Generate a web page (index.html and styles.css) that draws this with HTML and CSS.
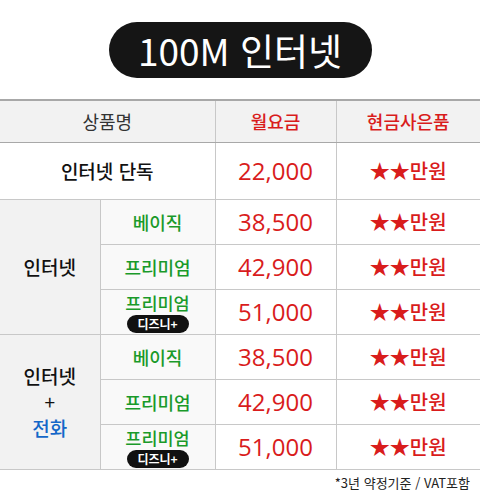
FILE: index.html
```html
<!DOCTYPE html>
<html lang="ko">
<head>
<meta charset="utf-8">
<link rel="stylesheet" href="styles.css">
</head>
<body>
<div class="page">
  <div class="title-wrap"><h1 class="title">100M 인터넷</h1></div>
  <table class="price">
    <colgroup><col class="c1"><col class="c2"><col class="c3"><col class="c4"></colgroup>
    <thead>
      <tr class="head">
        <th colspan="2" class="h-name">상품명</th>
        <th class="h-red">월요금</th>
        <th class="h-red">현금사은품</th>
      </tr>
    </thead>
    <tbody>
      <tr class="solo">
        <td colspan="2" class="solo-name">인터넷 단독</td>
        <td class="fee">22,000</td>
        <td class="gift">★★만원</td>
      </tr>
      <tr class="sub">
        <td rowspan="3" class="group">인터넷</td>
        <td class="plan">베이직</td>
        <td class="fee">38,500</td>
        <td class="gift">★★만원</td>
      </tr>
      <tr class="sub">
        <td class="plan">프리미엄</td>
        <td class="fee">42,900</td>
        <td class="gift">★★만원</td>
      </tr>
      <tr class="sub">
        <td class="plan"><div class="plan-stack"><span class="plan-name">프리미엄</span><span class="badge">디즈니+</span></div></td>
        <td class="fee">51,000</td>
        <td class="gift">★★만원</td>
      </tr>
      <tr class="sub">
        <td rowspan="3" class="group">인터넷<br><span class="plus">+</span><br><span class="blue">전화</span></td>
        <td class="plan">베이직</td>
        <td class="fee">38,500</td>
        <td class="gift">★★만원</td>
      </tr>
      <tr class="sub">
        <td class="plan">프리미엄</td>
        <td class="fee">42,900</td>
        <td class="gift">★★만원</td>
      </tr>
      <tr class="sub last">
        <td class="plan"><div class="plan-stack"><span class="plan-name">프리미엄</span><span class="badge">디즈니+</span></div></td>
        <td class="fee">51,000</td>
        <td class="gift">★★만원</td>
      </tr>
    </tbody>
  </table>
  <p class="note">*3년 약정기준 / VAT포함</p>
</div>
</body>
</html>
```

FILE: styles.css
```css
* { box-sizing: border-box; }
html, body { margin: 0; padding: 0; background: #fff; }
body {
  width: 480px;
  font-family: "Noto Sans CJK KR", "Noto Sans", sans-serif;
  color: #111;
}
.page { width: 480px; }
.title-wrap {
  display: flex;
  justify-content: center;
  padding-top: 22px;
  height: 99px;
}
.title {
  margin: 0;
  width: 263px;
  height: 56px;
  border-radius: 28px;
  background: #151515;
  color: #fff;
  font-size: 37px;
  font-weight: 400;
  line-height: 56px;
  text-align: center;
  letter-spacing: 0;
}
.price {
  width: 480px;
  border-collapse: collapse;
  table-layout: fixed;
}
.c1 { width: 100px; }
.c2 { width: 115px; }
.c3 { width: 121px; }
.c4 { width: 144px; }
.price th, .price td {
  border: 1px solid #c8c8c8;
  padding: 0;
  text-align: center;
  vertical-align: middle;
}
.price tr > :first-child { border-left: none; }
.price tr > :last-child { border-right: none; }
.head th {
  height: 42px;
  background: #f2f2f2;
  border-top: 2px solid #a8a8a8;
  border-bottom: 1px solid #a8a8a8;
  font-size: 18px;
  font-weight: 400;
  color: #333;
}
.head th.h-red { color: #d91c1c; font-weight: 500; }
.solo td { height: 57px; }
.solo-name { font-size: 19px; font-weight: 500; color: #111; }
.fee {
  font-family: "Open Sans", "Noto Sans CJK KR", sans-serif;
  font-size: 24px;
  color: #d91c1c;
  font-weight: 400;
}
.gift {
  font-size: 20px;
  color: #d91c1c;
  font-weight: 500;
}
.sub td { height: 45px; }
.group {
  background: #f2f2f2;
  font-size: 19px;
  font-weight: 500;
  line-height: 26px;
  color: #111;
}
.plus { font-weight: 400; }
.blue { color: #1467c8; }
.plan {
  background: #f9f9f9;
  color: #1a9a2a;
  font-size: 18px;
  font-weight: 500;
}
.plan-stack {
  display: flex;
  flex-direction: column;
  align-items: center;
}
.plan-name {
  font-size: 17.5px;
  line-height: 25px;
  margin-top: -1px;
}
.badge {
  width: 62px;
  height: 18px;
  line-height: 18px;
  border-radius: 9px;
  background: #111;
  color: #fff;
  font-size: 12px;
  font-weight: 700;
}
.note {
  margin: 3px 10px 0 0;
  text-align: right;
  font-size: 13px;
  color: #222;
}
```
